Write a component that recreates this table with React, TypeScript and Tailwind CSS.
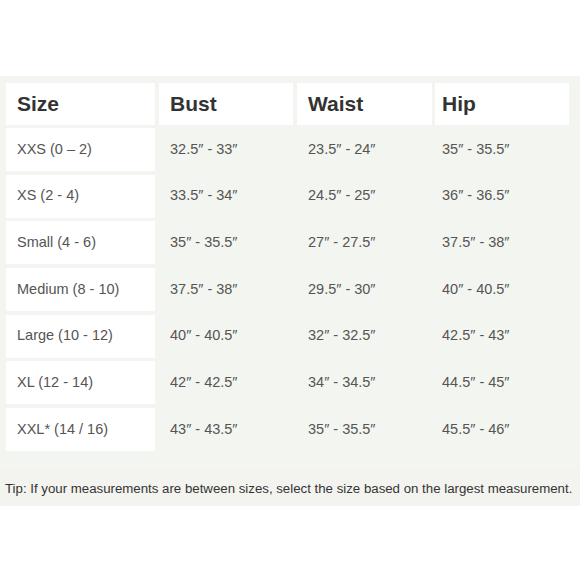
const rows = [
  ["XXS (0 – 2)", "32.5″ - 33″", "23.5″ - 24″", "35″ - 35.5″"],
  ["XS (2 - 4)", "33.5″ - 34″", "24.5″ - 25″", "36″ - 36.5″"],
  ["Small (4 - 6)", "35″ - 35.5″", "27″ - 27.5″", "37.5″ - 38″"],
  ["Medium (8 - 10)", "37.5″ - 38″", "29.5″ - 30″", "40″ - 40.5″"],
  ["Large (10 - 12)", "40″ - 40.5″", "32″ - 32.5″", "42.5″ - 43″"],
  ["XL (12 - 14)", "42″ - 42.5″", "34″ - 34.5″", "44.5″ - 45″"],
  ["XXL* (14 / 16)", "43″ - 43.5″", "35″ - 35.5″", "45.5″ - 46″"],
];

const cols = ["w-[149px] pl-[11px]", "w-[134px] pl-[11px]", "w-[135px] pl-[11px]", "w-[134px] pl-[7px]"];
const gaps = ["mr-[4px]", "mr-[4px]", "mr-[3px]", ""];

export default function App() {
  return (
    <div className="w-[580px] h-[580px] bg-white font-['Liberation_Sans',Arial,sans-serif]">
      <div className="h-[76px]" />
      <div className="bg-[#f3f5f0] pt-[7px]">
        {/* header */}
        <div className="flex pl-[6px]">
          {["Size", "Bust", "Waist", "Hip"].map((h, i) => (
            <div
              key={h}
              className={`${cols[i]} ${gaps[i]} h-[42px] bg-white flex items-center text-[21px] font-bold text-[#333]`}
            >
              {h}
            </div>
          ))}
        </div>
        {/* body */}
        <div className="flex flex-col gap-[3.7px] pt-[3px] pl-[6px]">
          {rows.map((r) => (
            <div key={r[0]} className="flex h-[43px]">
              {r.map((c, i) => (
                <div
                  key={i}
                  className={`${cols[i]} ${gaps[i]} flex items-center text-[14.5px] text-[#555] ${i === 0 ? "bg-white" : ""}`}
                >
                  {c}
                </div>
              ))}
            </div>
          ))}
        </div>
        <div className="h-[18px]" />
        <div className="bg-[#f3f3ef] h-[37px] flex items-center pt-[2px] pl-[5px] text-[13.25px] text-[#333] whitespace-nowrap">
          Tip: If your measurements are between sizes, select the size based on the largest measurement.
        </div>
      </div>
    </div>
  );
}
